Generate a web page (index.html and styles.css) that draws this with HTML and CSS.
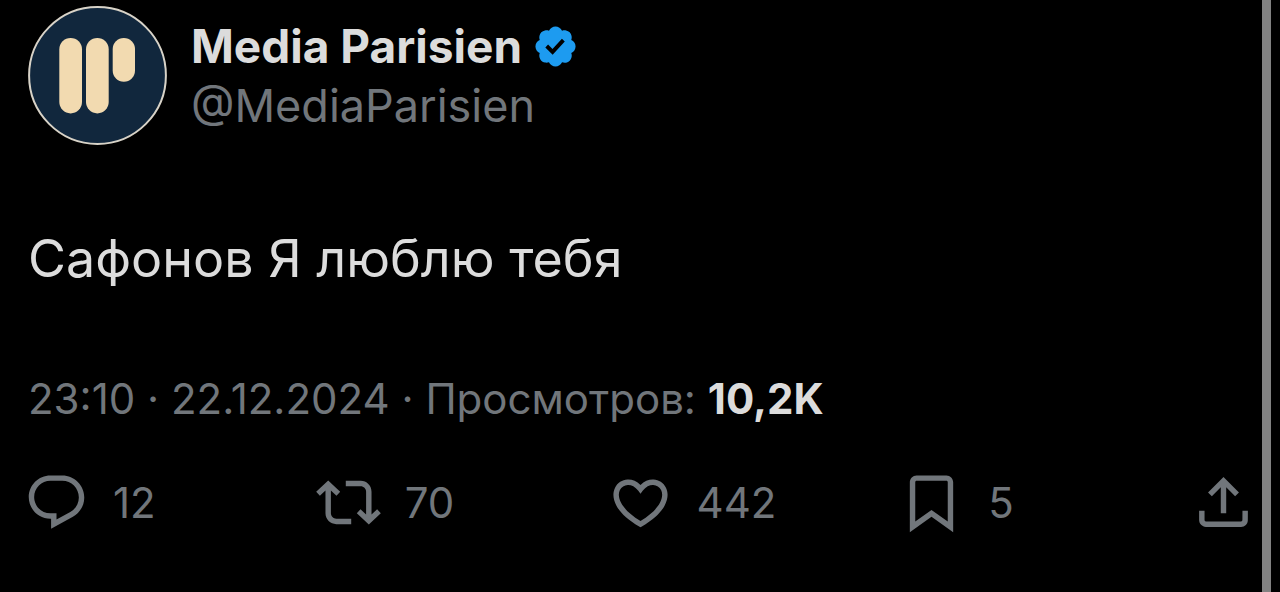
FILE: index.html
```html
<!DOCTYPE html>
<html lang="ru">
<head>
<meta charset="utf-8">
<title>Media Parisien</title>
<link rel="stylesheet" href="styles.css">
</head>
<body>
<div class="page">
  <article class="post">
    <header class="author">
      <svg class="avatar" viewBox="0 0 139 139" role="img" aria-label="Media Parisien">
        <circle cx="69.5" cy="69.5" r="68.4" fill="#11273d" stroke="#d8d3c8" stroke-width="2"/>
        <g fill="#f2dab0">
          <rect x="31.3" y="32" width="22.7" height="75.4" rx="11.3"/>
          <rect x="58" y="32" width="22.7" height="75.4" rx="11.3"/>
          <rect x="84.7" y="32" width="22.3" height="43.7" rx="11.1"/>
        </g>
      </svg>
      <div class="names">
        <div class="name-row">
          <h1 class="name">Media Parisien</h1>
          <svg class="badge" viewBox="0 0 22 22" aria-hidden="true"><path d="M20.396 11c-.018-.646-.215-1.275-.57-1.816-.354-.54-.852-.972-1.438-1.246.223-.607.27-1.264.14-1.897-.131-.634-.437-1.218-.882-1.687-.47-.445-1.053-.75-1.687-.882-.633-.13-1.29-.083-1.897.14-.273-.587-.704-1.086-1.245-1.44S11.647 1.62 11 1.604c-.646.017-1.273.213-1.813.568s-.969.854-1.24 1.44c-.608-.223-1.267-.272-1.902-.14-.635.13-1.22.436-1.69.882-.445.47-.749 1.055-.878 1.688-.13.633-.08 1.29.144 1.896-.587.274-1.087.705-1.443 1.245-.356.54-.555 1.17-.574 1.817.02.647.218 1.276.574 1.817.356.54.856.972 1.443 1.245-.224.606-.274 1.263-.144 1.896.13.634.433 1.218.877 1.688.47.443 1.054.747 1.687.878.633.132 1.29.084 1.897-.136.274.586.705 1.084 1.246 1.439.54.354 1.17.551 1.816.569.647-.016 1.276-.213 1.817-.567s.972-.854 1.245-1.44c.604.239 1.266.296 1.903.164.636-.132 1.22-.447 1.68-.907.46-.46.776-1.044.908-1.681s.075-1.299-.165-1.903c.586-.274 1.084-.705 1.439-1.246.354-.54.551-1.17.569-1.816zM9.662 14.85l-3.429-3.428 1.293-1.302 2.072 2.072 4.4-4.794 1.347 1.246z"/></svg>
        </div>
        <a class="handle" href="#">@MediaParisien</a>
      </div>
    </header>
    <p class="text">Сафонов Я люблю тебя</p>
    <p class="meta">23:10 · 22.12.2024 · Просмотров: <strong class="views">10,2K</strong></p>
    <div class="actions">
      <button class="action" type="button" aria-label="Ответить: 12">
        <svg class="icon" viewBox="0 0 24 24" aria-hidden="true"><path d="M1.751 10c0-4.42 3.584-8 8.005-8h4.366c4.49 0 8.129 3.64 8.129 8.13 0 2.96-1.607 5.68-4.196 7.11l-8.054 4.46v-3.69h-.067c-4.49.1-8.183-3.51-8.183-8.01zm8.005-6c-3.317 0-6.005 2.69-6.005 6 0 3.37 2.77 6.08 6.138 6.01l.351-.01h1.761v2.3l5.087-2.81c1.951-1.08 3.163-3.13 3.163-5.36 0-3.39-2.744-6.13-6.129-6.13H9.756z"/></svg>
        <span>12</span>
      </button>
      <button class="action" type="button" aria-label="Репост: 70">
        <svg class="icon" viewBox="0 0 24 24" aria-hidden="true"><path d="M4.5 3.88l4.432 4.14-1.364 1.46L5.5 7.55V16c0 1.1.896 2 2 2H13v2H7.5c-2.209 0-4-1.79-4-4V7.55L1.432 9.48.068 8.02 4.5 3.88zM16.5 6H11V4h5.5c2.209 0 4 1.79 4 4v8.45l2.068-1.93 1.364 1.46-4.432 4.14-4.432-4.14 1.364-1.46 2.068 1.93V8c0-1.1-.896-2-2-2z"/></svg>
        <span>70</span>
      </button>
      <button class="action" type="button" aria-label="Нравится: 442">
        <svg class="icon" viewBox="0 0 24 24" aria-hidden="true"><path d="M16.697 5.5c-1.222-.06-2.679.51-3.89 2.16l-.805 1.09-.806-1.09C9.984 6.01 8.526 5.44 7.304 5.5c-1.243.07-2.349.78-2.91 1.91-.552 1.12-.633 2.78.479 4.82 1.074 1.97 3.257 4.27 7.129 6.61 3.87-2.34 6.052-4.64 7.126-6.61 1.111-2.04 1.03-3.7.477-4.82-.561-1.13-1.666-1.84-2.908-1.91zm4.187 7.69c-1.351 2.48-4.001 5.12-8.379 7.67l-.503.3-.504-.3c-4.379-2.55-7.029-5.19-8.382-7.67-1.36-2.5-1.41-4.86-.514-6.67.887-1.79 2.647-2.91 4.601-3.01 1.651-.09 3.368.56 4.798 2.01 1.429-1.45 3.146-2.1 4.796-2.01 1.954.1 3.714 1.22 4.601 3.01.896 1.81.846 4.17-.514 6.67z"/></svg>
        <span>442</span>
      </button>
      <button class="action" type="button" aria-label="Закладки: 5">
        <svg class="icon" viewBox="0 0 24 24" aria-hidden="true"><path d="M4 4.5C4 3.12 5.119 2 6.5 2h11C18.881 2 20 3.12 20 4.5v18.44l-8-5.71-8 5.71V4.5zM6.5 4c-.276 0-.5.22-.5.5v14.56l6-4.29 6 4.29V4.5c0-.28-.224-.5-.5-.5h-11z"/></svg>
        <span>5</span>
      </button>
      <button class="action" type="button" aria-label="Поделиться">
        <svg class="icon" viewBox="0 0 24 24" aria-hidden="true"><path d="M12 2.59l5.7 5.7-1.41 1.42L13 6.41V16h-2V6.41l-3.3 3.3-1.41-1.42L12 2.59zM21 15l-.02 3.51c0 1.38-1.12 2.49-2.5 2.49H5.5C4.11 21 3 19.88 3 18.5V15h2v3.5c0 .28.22.5.5.5h12.98c.28 0 .5-.22.5-.5L19 15h2z"/></svg>
      </button>
    </div>
  </article>
  <div class="edge"></div>
</div>
</body>
</html>
```
FILE: styles.css
```css
* {
  box-sizing: border-box;
}

body {
  margin: 0;
  background: #000;
  color: #dcdcdc;
  font-family: Inter, "Liberation Sans", sans-serif;
}

.page {
  display: flex;
  min-height: 100vh;
  padding-right: 9px;
}

.post {
  flex: 1;
  min-width: 0;
  padding: 6px 6px 0 24px;
}

.edge {
  width: 9px;
  background: #828282;
}

.author {
  display: flex;
  gap: 24px;
  padding-left: 4px;
}

.avatar {
  flex: none;
  width: 139px;
  height: 139px;
}

.names {
  padding-top: 10px;
}

.name-row {
  display: flex;
  align-items: center;
  gap: 10px;
}

.name {
  margin: 0;
  font-size: 46px;
  line-height: 60px;
  font-weight: 700;
}

.badge {
  width: 47px;
  height: 47px;
  fill: #1d9bf0;
}

.handle {
  display: block;
  color: #71767b;
  font-size: 45px;
  line-height: 60px;
  text-decoration: none;
}

.text {
  margin: 80px 0 0;
  padding-left: 4px;
  font-size: 52px;
  line-height: 68px;
}

.meta {
  margin: 76px 0 0;
  padding-left: 4px;
  color: #71767b;
  font-size: 42px;
  line-height: 60px;
}

.views {
  color: #dcdcdc;
  font-weight: 700;
}

.actions {
  display: grid;
  grid-template-columns: repeat(4, 1fr) auto;
  margin-top: 41px;
}

.action {
  display: flex;
  align-items: center;
  gap: 24px;
  padding: 0;
  border: 0;
  background: none;
  color: #71767b;
  font-family: inherit;
  font-size: 42px;
  line-height: 64px;
  cursor: pointer;
}

.icon {
  flex: none;
  width: 65px;
  height: 65px;
  fill: currentColor;
}
```
